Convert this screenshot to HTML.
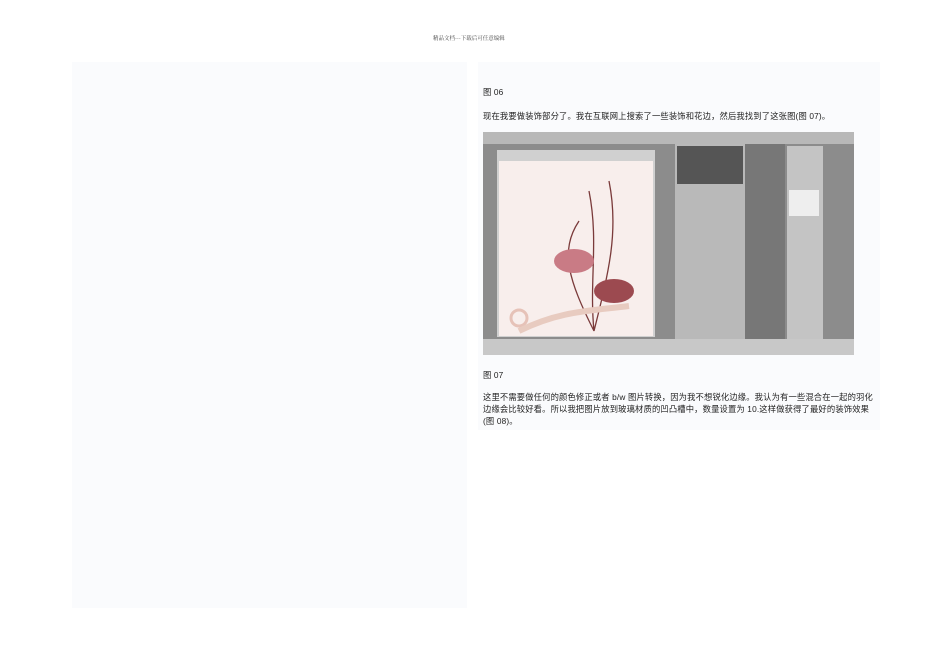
<!DOCTYPE html>
<html><head><meta charset="utf-8"><style>
body{margin:0;width:950px;height:672px;background:#fff;position:relative;overflow:hidden;font-family:"Liberation Sans","Noto Sans CJK SC",sans-serif;color:#222}
.a{position:absolute}
.t{font-size:8.3px;line-height:12px;letter-spacing:0.15px}
</style></head><body>
<div class="a" style="left:433px;top:34px;font-size:5.5px;color:#444;font-family:'Noto Serif CJK SC',serif">精品文档---下载后可任意编辑</div>
<div class="a" style="left:72px;top:62px;width:395px;height:546px;background:#fafbfd"></div>
<div class="a" style="left:478px;top:62px;width:402px;height:368px;background:#fafbfd"></div>
<div class="a t" style="left:483px;top:86px">图 06</div>
<div class="a t" style="left:483px;top:110px">现在我要做装饰部分了。我在互联网上搜索了一些装饰和花边，然后我找到了这张图(图 07)。</div>
<div class="a" style="left:483px;top:132px;width:371px;height:223px;background:#8c8c8c;overflow:hidden">
 <div class="a" style="left:0;top:0;width:371px;height:12px;background:#b8b8b8"></div>
 <div class="a" style="left:14px;top:18px;width:158px;height:187px;background:#d0d0d0"></div>
 <div class="a" style="left:16px;top:29px;width:154px;height:175px;background:#f8eeec"></div>
 <svg class="a" style="left:16px;top:29px" width="154" height="175">
  <path d="M95 170 C90 120 100 80 90 30 M95 170 C110 110 120 70 110 20 M95 170 C70 120 60 90 80 60" stroke="#7a3a3a" stroke-width="1.3" fill="none"/>
  <ellipse cx="75" cy="100" rx="20" ry="12" fill="#c97b85"/>
  <ellipse cx="115" cy="130" rx="20" ry="12" fill="#9c4a50"/>
  <circle cx="20" cy="157" r="8" fill="none" stroke="#e6c2b8" stroke-width="3"/>
  <path d="M20 170 C60 150 90 150 130 145" stroke="#e8cbc0" stroke-width="6" fill="none"/>
 </svg>
 <div class="a" style="left:192px;top:12px;width:70px;height:195px;background:#b9b9b9"></div>
 <div class="a" style="left:194px;top:14px;width:66px;height:38px;background:#555"></div>
 <div class="a" style="left:262px;top:12px;width:40px;height:195px;background:#777"></div>
 <div class="a" style="left:304px;top:14px;width:36px;height:195px;background:#c4c4c4"></div>
 <div class="a" style="left:306px;top:58px;width:30px;height:26px;background:#eee"></div>
 <div class="a" style="left:0;top:207px;width:371px;height:16px;background:#c8c8c8"></div>
</div>
<div class="a t" style="left:483px;top:369px">图 07</div>
<div class="a t" style="left:483px;top:391px;width:390px">这里不需要做任何的颜色修正或者 b/w 图片转换，因为我不想锐化边缘。我认为有一些混合在一起的羽化边缘会比较好看。所以我把图片放到玻璃材质的凹凸槽中，数量设置为 10.这样做获得了最好的装饰效果(图 08)。</div>
</body></html>
